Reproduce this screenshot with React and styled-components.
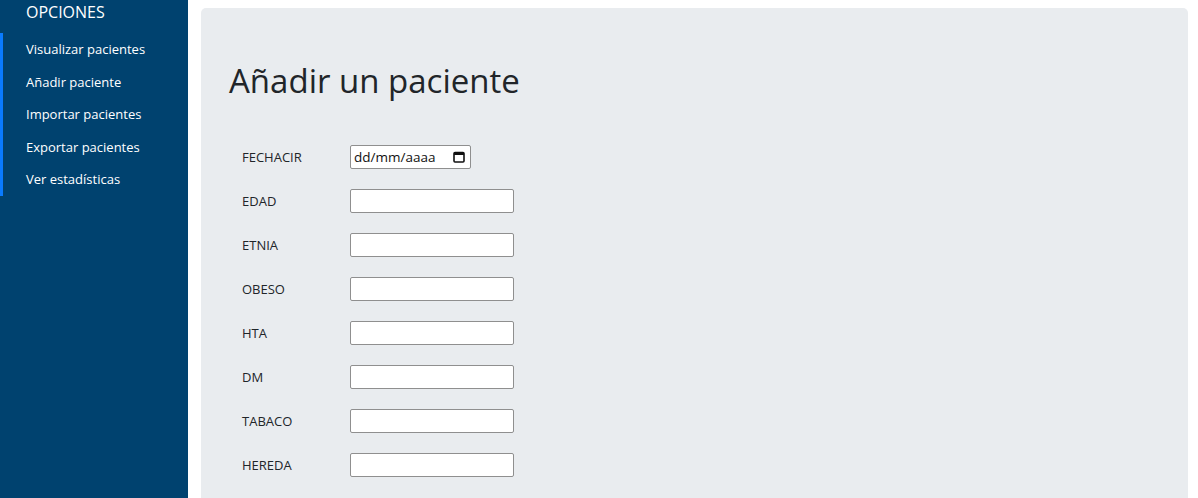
import React from "react";
import styled, { createGlobalStyle } from "styled-components";

const Global = createGlobalStyle`
  html, body { margin: 0; padding: 0; overflow: hidden; height: 100%; }
  body { font-family: "Open Sans", "Noto Sans", sans-serif; background: #fff; color: #212529; }
  * { box-sizing: border-box; }
`;

const Layout = styled.div`
  display: flex;
  height: 498px;
`;

const Sidebar = styled.aside`
  width: 188px;
  flex: none;
  background: #00426f;
  color: #fff;
`;

const SideTitle = styled.div`
  font-size: 16px;
  line-height: 21px;
  padding: 2px 0 10px 26px;
`;

const NavList = styled.ul`
  list-style: none;
  margin: 0;
  padding: 0;
  border-left: 3px solid #0a7bff;
`;

const NavItem = styled.li`
  height: 32.5px;
  display: flex;
  align-items: center;
  padding-left: 23px;
  font-size: 13px;
  color: #fff;
`;

const Main = styled.main`
  flex: 1;
  padding: 8px 10px 0 13px;
  min-width: 0;
`;

const Panel = styled.section`
  background: #e9ecef;
  border-radius: 5px;
  padding: 53px 28px 80px;
`;

const Title = styled.h1`
  margin: 0 0 34.5px;
  font-size: 33px;
  font-weight: 500;
  line-height: 1.2;
  color: #212529;
`;

const Form = styled.form`
  display: flex;
  flex-direction: column;
  padding-left: 13px;
`;

const Row = styled.div`
  display: flex;
  align-items: center;
  height: 44px;
`;

const Label = styled.label`
  width: 108px;
  font-size: 13px;
  color: #212529;
`;

const TextInput = styled.input`
  width: 164px;
  height: 24px;
  border: 1px solid #8f8f8f;
  border-radius: 2px;
  background: #fff;
  padding: 1px 4px;
  font: 13px "Liberation Sans", Arial, sans-serif;
`;

const DateBox = styled.div`
  width: 121px;
  height: 24px;
  border: 1px solid #8f8f8f;
  border-radius: 2px;
  background: #fff;
  display: flex;
  align-items: center;
  justify-content: space-between;
  padding: 0 5px 0 3px;
  font-size: 13.5px;
  color: #111;
`;

const CalIcon = () => (
  <svg width="12" height="12" viewBox="0 0 12 12">
    <rect x="1" y="1.5" width="10" height="9.5" rx="1" fill="none" stroke="#111" strokeWidth="1.6" />
    <rect x="1" y="1.5" width="10" height="2.5" fill="#111" />
  </svg>
);

const fields = ["EDAD", "ETNIA", "OBESO", "HTA", "DM", "TABACO", "HEREDA"];

export default function App() {
  return (
    <>
      <Global />
      <Layout>
        <Sidebar>
          <SideTitle>OPCIONES</SideTitle>
          <NavList>
            <NavItem>Visualizar pacientes</NavItem>
            <NavItem>Añadir paciente</NavItem>
            <NavItem>Importar pacientes</NavItem>
            <NavItem>Exportar pacientes</NavItem>
            <NavItem>Ver estadísticas</NavItem>
          </NavList>
        </Sidebar>
        <Main>
          <Panel>
            <Title>Añadir un paciente</Title>
            <Form>
              <Row>
                <Label>FECHACIR</Label>
                <DateBox>
                  <span>dd/mm/aaaa</span>
                  <CalIcon />
                </DateBox>
              </Row>
              {fields.map((f) => (
                <Row key={f}>
                  <Label>{f}</Label>
                  <TextInput type="text" />
                </Row>
              ))}
            </Form>
          </Panel>
        </Main>
      </Layout>
    </>
  );
}
